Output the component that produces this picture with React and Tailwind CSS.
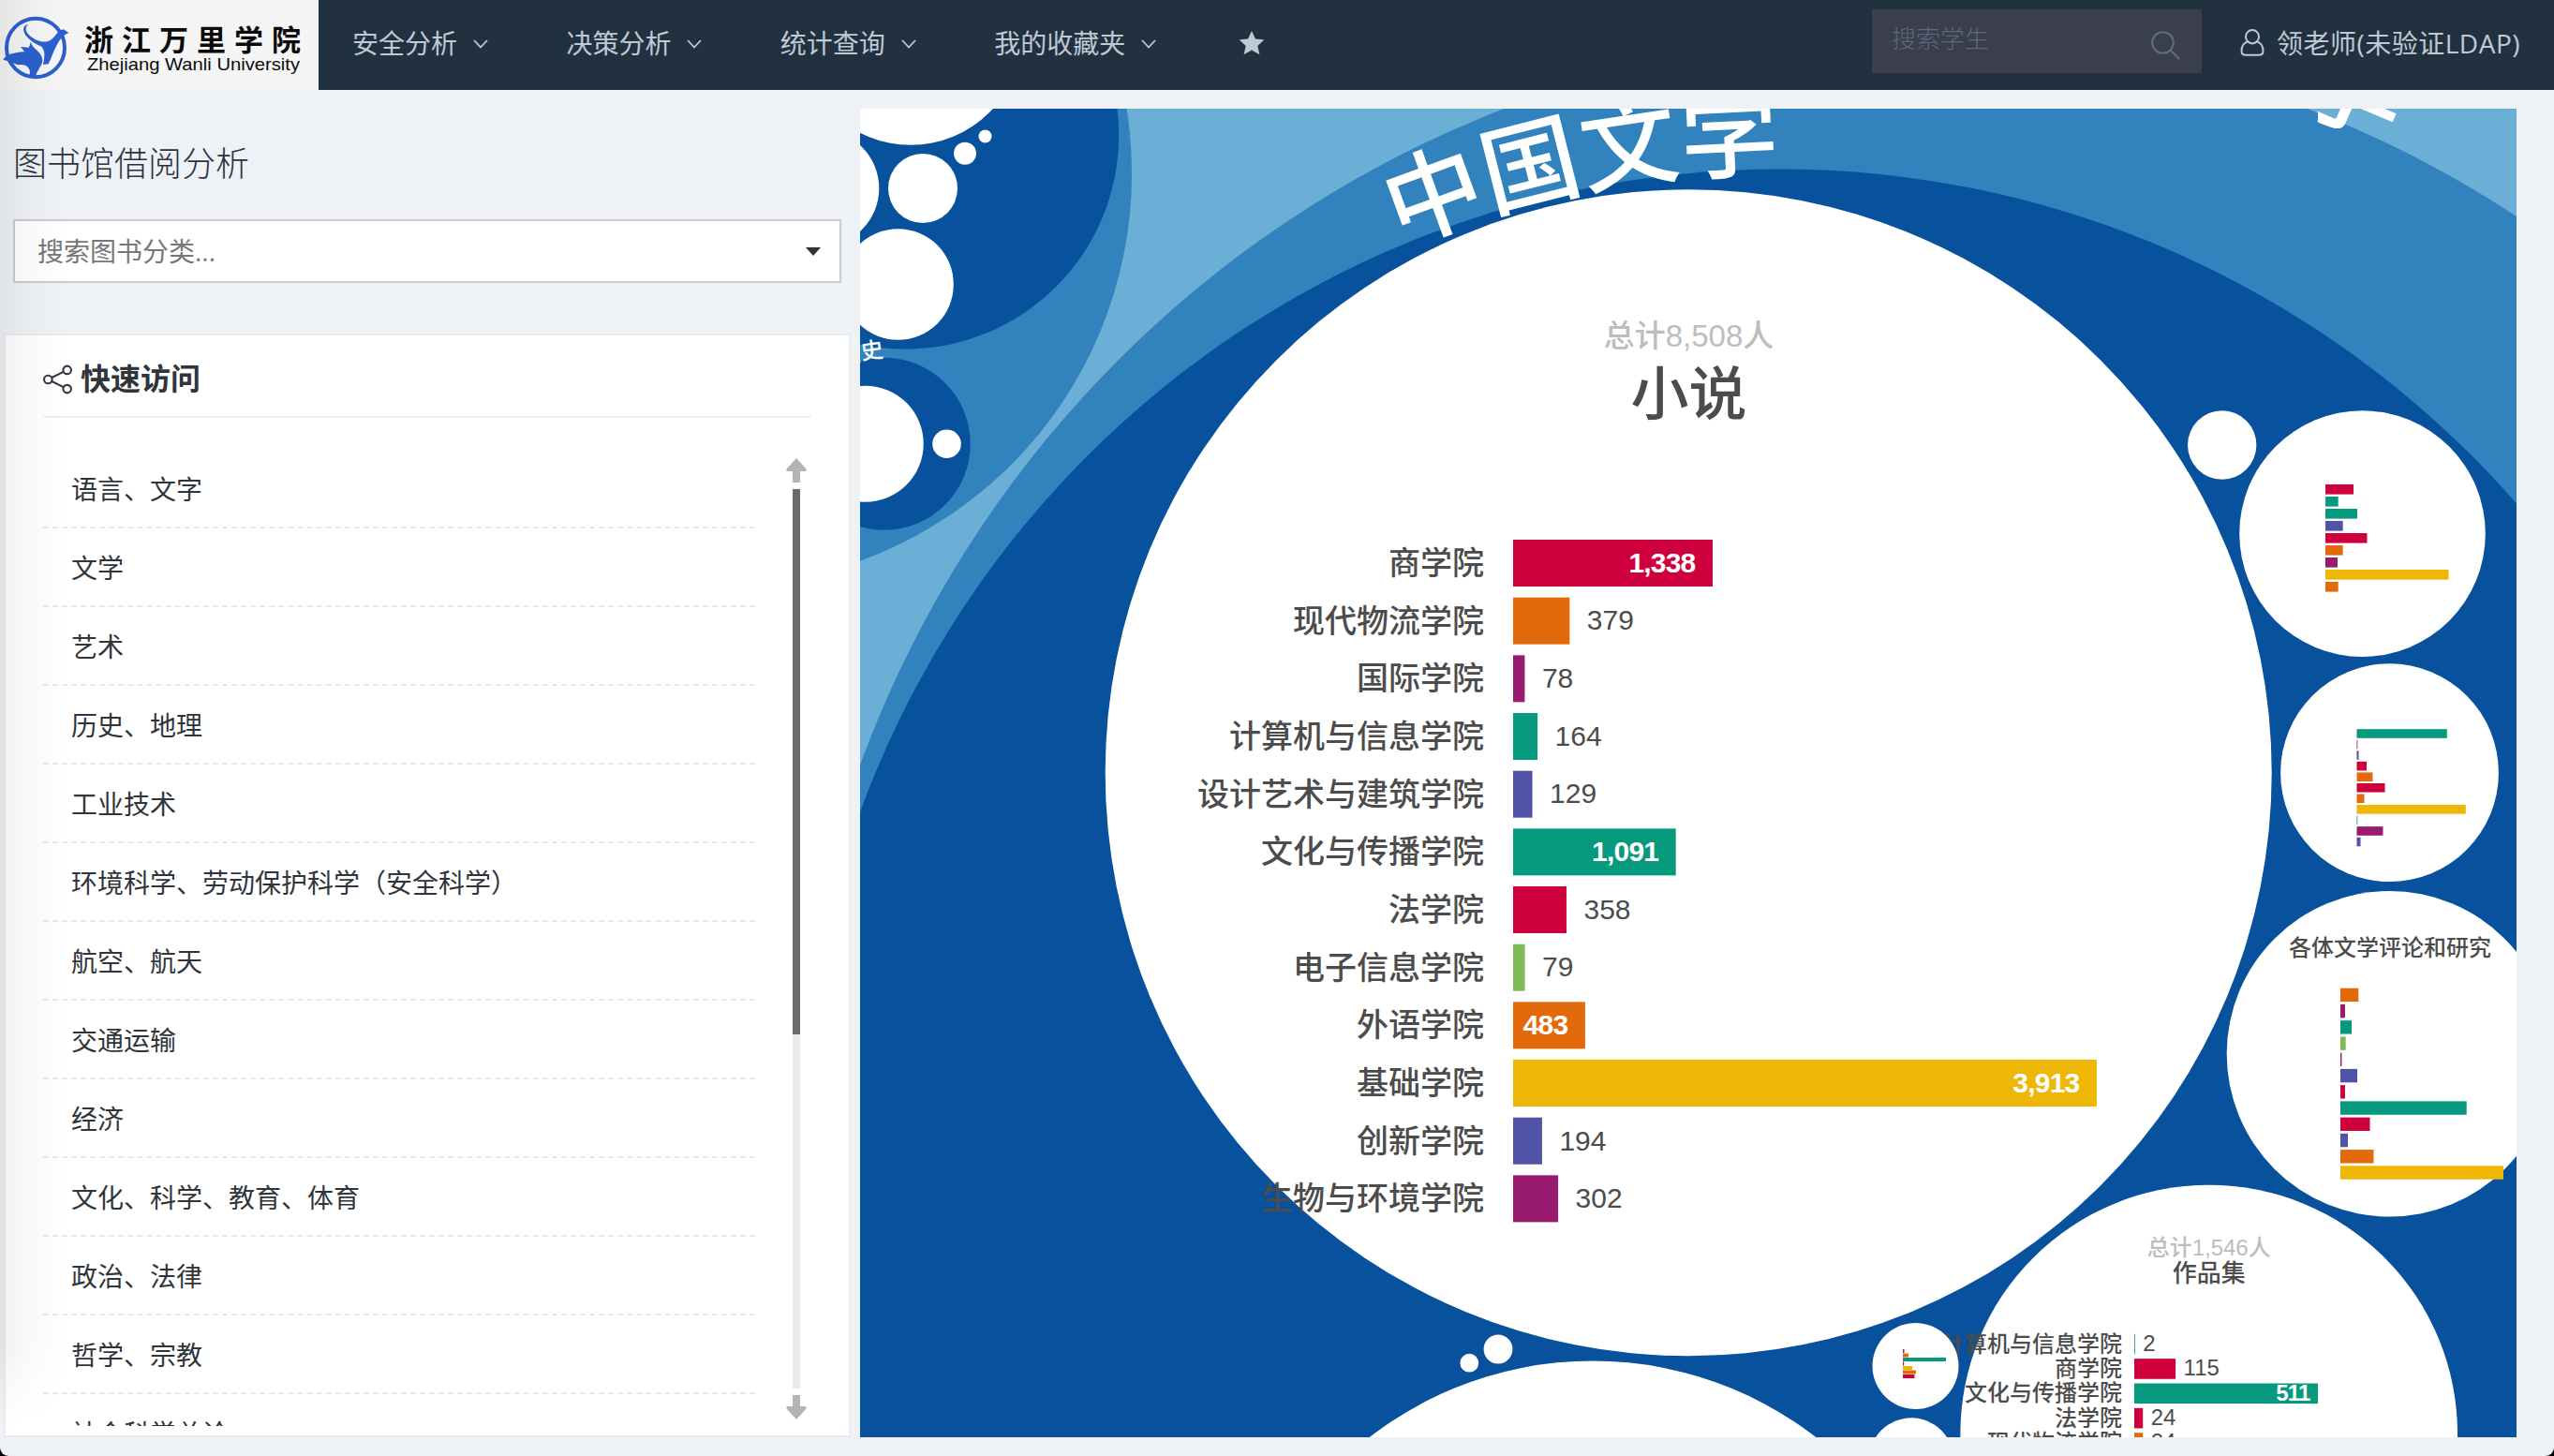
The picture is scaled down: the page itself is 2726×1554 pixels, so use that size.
import React from "react";

const UI_FONT = "font-['Open_Sans','Noto_Sans_CJK_SC',sans-serif]";

const RED = "#ce003d";
const ORANGE = "#e36a0b";
const PURPLE = "#981b6f";
const TEAL = "#07997d";
const INDIGO = "#5053a6";
const GREEN = "#7fba57";
const YELLOW = "#eeb605";
const DEEP = "#08519c";
const MID = "#3182bd";
const PALE = "#6baed6";
const INK = "#4c4c4c";

const menus = ["安全分析", "决策分析", "统计查询", "我的收藏夹"];

const categories = [
  "语言、文字",
  "文学",
  "艺术",
  "历史、地理",
  "工业技术",
  "环境科学、劳动保护科学（安全科学）",
  "航空、航天",
  "交通运输",
  "经济",
  "文化、科学、教育、体育",
  "政治、法律",
  "哲学、宗教",
  "社会科学总论",
];

const novel = [
  ["商学院", 1338, "1,338", RED, true],
  ["现代物流学院", 379, "379", ORANGE, false],
  ["国际学院", 78, "78", PURPLE, false],
  ["计算机与信息学院", 164, "164", TEAL, false],
  ["设计艺术与建筑学院", 129, "129", INDIGO, false],
  ["文化与传播学院", 1091, "1,091", TEAL, true],
  ["法学院", 358, "358", RED, false],
  ["电子信息学院", 79, "79", GREEN, false],
  ["外语学院", 483, "483", ORANGE, true],
  ["基础学院", 3913, "3,913", YELLOW, true],
  ["创新学院", 194, "194", INDIGO, false],
  ["生物与环境学院", 302, "302", PURPLE, false],
];

const collected = [
  ["计算机与信息学院", 2, "2", TEAL, false],
  ["商学院", 115, "115", RED, false],
  ["文化与传播学院", 511, "511", TEAL, true],
  ["法学院", 24, "24", RED, false],
  ["现代物流学院", 24, "24", ORANGE, false],
];

const miniCharts = [
  {
    x: 2482, y: 517, pitch: 13, h: 10.6,
    bars: [[30, RED], [13.7, TEAL], [34, TEAL], [18.7, INDIGO], [44.5, RED], [18.7, ORANGE], [13, PURPLE], [131.5, YELLOW], [13.7, ORANGE]],
  },
  {
    x: 2515.5, y: 778.2, pitch: 11.55, h: 9.6,
    bars: [[96.3, TEAL], [0.8, PURPLE], [2, INDIGO], [10.5, RED], [17, ORANGE], [30, RED], [8, ORANGE], [116.3, YELLOW], [0.8, TEAL], [28, PURPLE], [4, INDIGO]],
  },
  {
    x: 2498, y: 1054.7, pitch: 17.24, h: 14.4,
    bars: [[19.3, ORANGE], [5, PURPLE], [12, TEAL], [5.7, GREEN], [1.4, PURPLE], [18, INDIGO], [5, RED], [134.7, TEAL], [31.5, RED], [8, INDIGO], [35.5, ORANGE], [174, YELLOW]],
  },
];

const tinyChart = {
  x: 2031, y: 1440, pitch: 4.5, h: 4,
  bars: [[1.5, PURPLE], [6, ORANGE], [46, TEAL], [1.2, RED], [10, YELLOW], [14, ORANGE], [12.5, RED]],
};

function Chevron() {
  return (
    <svg className="ml-[17px] mt-0.5 h-[10px] w-4" viewBox="0 0 16 10" fill="none" stroke="#c0c9d6" strokeWidth="1.8">
      <path d="M1 1 L8 8.5 L15 1" />
    </svg>
  );
}

function Logo() {
  return (
    <div className="h-24 w-[340px] shrink-0 bg-[#f5f5f5]">
      <svg className="block h-24 w-[340px]" viewBox="0 0 340 96">
        <ellipse cx="38" cy="51" rx="31" ry="31.2" fill="none" stroke="#2b60cd" strokeWidth="4" />
        <g transform="scale(.574 .3333)" fill="#2b60cd">
          <path d="M53 78 C46 86 47 100 54 112 C62 126 76 137 88 133 C98 128 104 110 110 98 L118 94 L128 105 C118 112 112 124 107 140 C100 160 96 185 90 205 L80 207 C84 180 84 160 76 148 C62 138 46 118 44 98 C43 88 46 80 53 78 Z" />
          <path d="M6 192 C10 176 22 168 46 166 L38 150 L54 152 L57 134 C62 160 74 160 78 184 C82 208 72 212 66 246 L54 246 C60 222 50 202 34 208 C26 204 20 196 6 192 Z" />
        </g>
        <g fill="#0b0b0b">
          <text x="90" y="54" fontSize="31" fontWeight="700" fontFamily="'Noto Sans CJK SC', serif" letterSpacing="9">浙江万里学院</text>
          <text x="93" y="75" fontSize="18.5" textLength="227" lengthAdjust="spacingAndGlyphs" fontFamily="'Liberation Sans', Arial, sans-serif">Zhejiang Wanli University</text>
        </g>
      </svg>
    </div>
  );
}

function Header() {
  return (
    <header className="flex h-24 items-center bg-[#22313f] text-[28px] leading-none text-[#c0c9d6]">
      <Logo />
      <nav className="flex items-center pb-[5px] pl-[36px]">
        {menus.map((m) => (
          <div key={m} className="mr-[83.4px] flex items-center whitespace-nowrap">
            <span>{m}</span>
            <Chevron />
          </div>
        ))}
        <svg className="ml-1 h-[26px] w-[28px]" viewBox="0 0 28 26" fill="#c0c9d6">
          <path d="M14 0 L17.9 8.6 L27.2 9.6 L20.3 16 L22.4 25.2 L14 20.4 L5.6 25.2 L7.7 16 L.8 9.6 L10.1 8.6 Z" />
        </svg>
      </nav>
      <div className="mb-2 ml-auto flex h-[68px] w-[352px] items-center justify-between bg-[#3a3f4b] pl-[21px] pr-[23px]">
        <span className="mb-[6px] text-[26px] font-light text-[#586a80]">搜索学生</span>
        <svg className="mt-[9px] h-[31px] w-[31px]" viewBox="0 0 31 31" fill="none" stroke="#5d6e85" strokeWidth="2">
          <circle cx="12.5" cy="12.5" r="11.3" />
          <path d="M20.5 20.5 L30 30" />
        </svg>
      </div>
      <div className="ml-[41px] mr-[36px] flex items-center whitespace-nowrap pb-[5px]">
        <svg className="mr-[13px] h-[29px] w-[26px]" viewBox="0 0 26 29" fill="none" stroke="#c0c9d6" strokeWidth="2">
          <path d="M8.2 13.4 C2.5 15 1.5 19.5 1.5 23.5 Q1.5 27.8 6 27.8 H20 Q24.5 27.8 24.5 23.5 C24.5 19.5 23.5 15 17.8 13.4" />
          <ellipse cx="13" cy="8.2" rx="7" ry="7.2" />
        </svg>
        <span className="tracking-[0.5px]">领老师(未验证LDAP)</span>
      </div>
    </header>
  );
}

function Arrow({ down }) {
  return (
    <svg className={down ? "h-[26px] w-[22px] rotate-180" : "h-[26px] w-[22px]"} viewBox="0 0 22 26" fill="#b3b3b3">
      <path d="M11 0 L21.5 11.5 V14 H15 V26 H7 V14 H.5 V11.5 Z" />
    </svg>
  );
}

function Sidebar() {
  return (
    <aside className="w-[918px] shrink-0">
      <h1 className="ml-[14px] mt-[61px] text-[36px] font-extralight leading-9 text-[#2b3340]">图书馆借阅分析</h1>
      <div className="ml-[14px] mt-[41px] flex h-[68px] w-[884px] items-center justify-between border-2 border-[#cbcbcb] bg-white pl-6 pr-[20px] text-[28px] leading-none text-[#777]">
        <span>搜索图书分类...</span>
        <svg className="h-[9px] w-4" viewBox="0 0 16 9" fill="#333">
          <path d="M0 0 H16 L8 9 Z" />
        </svg>
      </div>
      <section className="ml-1 mt-[54px] h-[1178px] w-[904px] border-2 border-[#e7ecf1] bg-white pl-10 pr-10">
        <div className="flex h-[88px] items-center border-b-2 border-[#eef1f5] pb-px">
          <svg className="mr-[9px] mt-2 h-8 w-[31px]" viewBox="0 0 32 32" fill="none" stroke="#343a44" strokeWidth="2.2">
            <circle cx="5.5" cy="16" r="4.4" />
            <circle cx="26.5" cy="5.6" r="4.4" />
            <circle cx="26.5" cy="26.4" r="4.4" />
            <path d="M9.5 14 L22.5 7.6 M9.5 18 L22.5 24.4" />
          </svg>
          <h2 className="mt-[6px] text-[32px] font-bold leading-none text-[#2f353b]">快速访问</h2>
        </div>
        <div className="mt-[34px] flex h-[1042px] justify-between">
          <ul className="w-[760px] overflow-hidden">
            {categories.map((c) => (
              <li key={c} className="flex h-[84px] items-center border-b-2 border-dashed border-[#dfebf8] pl-[30px] pt-px text-[28px] leading-none text-[#2f353b]">
                {c}
              </li>
            ))}
          </ul>
          <div className="mr-[5px] mt-[9px] flex w-[22px] flex-col items-center">
            <Arrow />
            <div className="mb-[7px] mt-[7px] h-[960px] w-2 bg-[#ebebeb]">
              <div className="h-[582px] w-2 bg-[#6b6b6b]" />
            </div>
            <Arrow down />
          </div>
        </div>
      </section>
    </aside>
  );
}

function Bars({ chart }) {
  return chart.bars.map(([w, c], i) => (
    <rect key={i} x={chart.x} y={chart.y + i * chart.pitch} width={w} height={chart.h} fill={c} />
  ));
}

function LabelledBars({ rows, x, y, pitch, h, unit, labelX, size, valueSize, gap, shift }) {
  return rows.map(([label, value, text, color, inside], i) => {
    const top = y + i * pitch;
    const mid = top + h / 2;
    const end = x + value * unit;
    return (
      <g key={label}>
        <rect x={x} y={top} width={Math.max(value * unit, 0.8)} height={h} fill={color} />
        <text x={labelX} y={mid - shift + size * 0.38} fontSize={size} fontWeight="500" textAnchor="end" fill={INK}>{label}</text>
        <text
          x={inside ? end - gap : end + gap}
          y={mid - shift + valueSize * 0.36}
          fontSize={valueSize}
          textAnchor={inside ? "end" : "start"}
          fontWeight={inside ? 700 : 400}
          letterSpacing={inside ? -0.8 : 0}
          fill={inside ? "#fff" : INK}
        >
          {text}
        </text>
      </g>
    );
  });
}

function BubbleChart() {
  return (
    <svg
      className="block h-[1418px] w-[1768px]"
      viewBox="918 116 1768 1418"
      fontFamily="'Liberation Sans', 'Noto Sans CJK SC', sans-serif"
    >
      <defs>
        <path id="arcOuter" d="M846 1224 A1188 1188 0 0 1 3222 1224" />
        <path id="arcInner" d="M854.5 1225.5 A1045 1045 0 0 1 2944.5 1225.5" />
        <path id="arcHistory" d="M851.7 473.7 A92 92 0 0 1 1035.7 473.7" />
      </defs>
      <rect x="918" y="116" width="1768" height="1418" fill={PALE} />
      <circle cx="768" cy="185" r="440" fill={MID} />
      <circle cx="2034" cy="1224" r="1188" fill={MID} />
      <circle cx="966" cy="144.5" r="228.2" fill={DEEP} />
      <circle cx="943.7" cy="473.7" r="92" fill={DEEP} />
      <circle cx="1899.5" cy="1225.5" r="1045" fill={DEEP} />
      <g fill="#fff">
        <circle cx="972" cy="36" r="118.8" />
        <circle cx="876" cy="201" r="62.3" />
        <circle cx="985" cy="201" r="37" />
        <circle cx="1030" cy="163.7" r="12" />
        <circle cx="1051.5" cy="145.5" r="7" />
        <circle cx="958.5" cy="303.5" r="59.3" />
        <circle cx="923.7" cy="473.7" r="62" />
        <circle cx="1010.5" cy="473.7" r="15.3" />
        <circle cx="1802.2" cy="824.8" r="622.5" />
        <circle cx="2371.7" cy="475" r="36.7" />
        <circle cx="2521.5" cy="569.6" r="131.3" />
        <circle cx="2550.5" cy="824.7" r="116.4" />
        <circle cx="2550.5" cy="1124.8" r="173.8" />
        <circle cx="2357.7" cy="1530" r="265.3" />
        <circle cx="1700" cy="1841.5" r="389" />
        <circle cx="1599" cy="1440" r="15.4" />
        <circle cx="1568.3" cy="1454.7" r="9.9" />
      </g>

      <g fill="#fff" fontFamily="'Noto Sans CJK SC', sans-serif" fontWeight="500" textAnchor="end">
        <text fontSize="104"><textPath href="#arcInner" startOffset="50%">中国文学</textPath></text>
        <text fontSize="114"><textPath href="#arcOuter" startOffset="2400">学</textPath></text>
        <text fontSize="24"><textPath href="#arcHistory" startOffset="50%">国史</textPath></text>
      </g>

      <g textAnchor="middle" fontWeight="500">
        <text x="1802.5" y="370" fontSize="33" fill="#bdbdbd">总计8,508人</text>
        <text x="1802.5" y="442.5" fontSize="62" fill={INK}>小说</text>
        <text x="2551" y="1020" fontSize="24" fill={INK}>各体文学评论和研究</text>
        <text x="2357.7" y="1340" fontSize="24" fill="#bdbdbd">总计1,546人</text>
        <text x="2357.7" y="1368.3" fontSize="26" fill={INK}>作品集</text>
      </g>

      <LabelledBars rows={novel} x={1615} y={576} pitch={61.67} h={50} unit={0.1592} labelX={1584} size={34} valueSize={30} gap={18.5} shift={1} />
      <LabelledBars rows={collected} x={2278} y={1423.8} pitch={26.35} h={21.6} unit={0.3835} labelX={2265} size={24} valueSize={24} gap={8.5} shift={1.2} />
      {miniCharts.map((c) => (
        <Bars key={c.y} chart={c} />
      ))}
      <circle cx="2044.5" cy="1458" r="46" fill="#fff" />
      <circle cx="2040" cy="1558.5" r="45.2" fill="#fff" />
      <Bars chart={tinyChart} />
    </svg>
  );
}

export default function App() {
  return (
    <div className="h-[1554px] w-[2726px] overflow-hidden bg-black">
      <div className={`relative h-[1554px] w-[2726px] overflow-hidden rounded-b-[9px] bg-[#eef1f6] ${UI_FONT}`}>
        <Header />
        <main className="flex">
          <Sidebar />
          <div className="mt-5">
            <BubbleChart />
          </div>
        </main>
        <div className="pointer-events-none absolute left-0 top-0 h-[1520px] w-[70px] bg-linear-to-r from-black/6 via-black/2 to-transparent [mask-image:linear-gradient(to_bottom,black_94%,transparent)]" />
      </div>
    </div>
  );
}
